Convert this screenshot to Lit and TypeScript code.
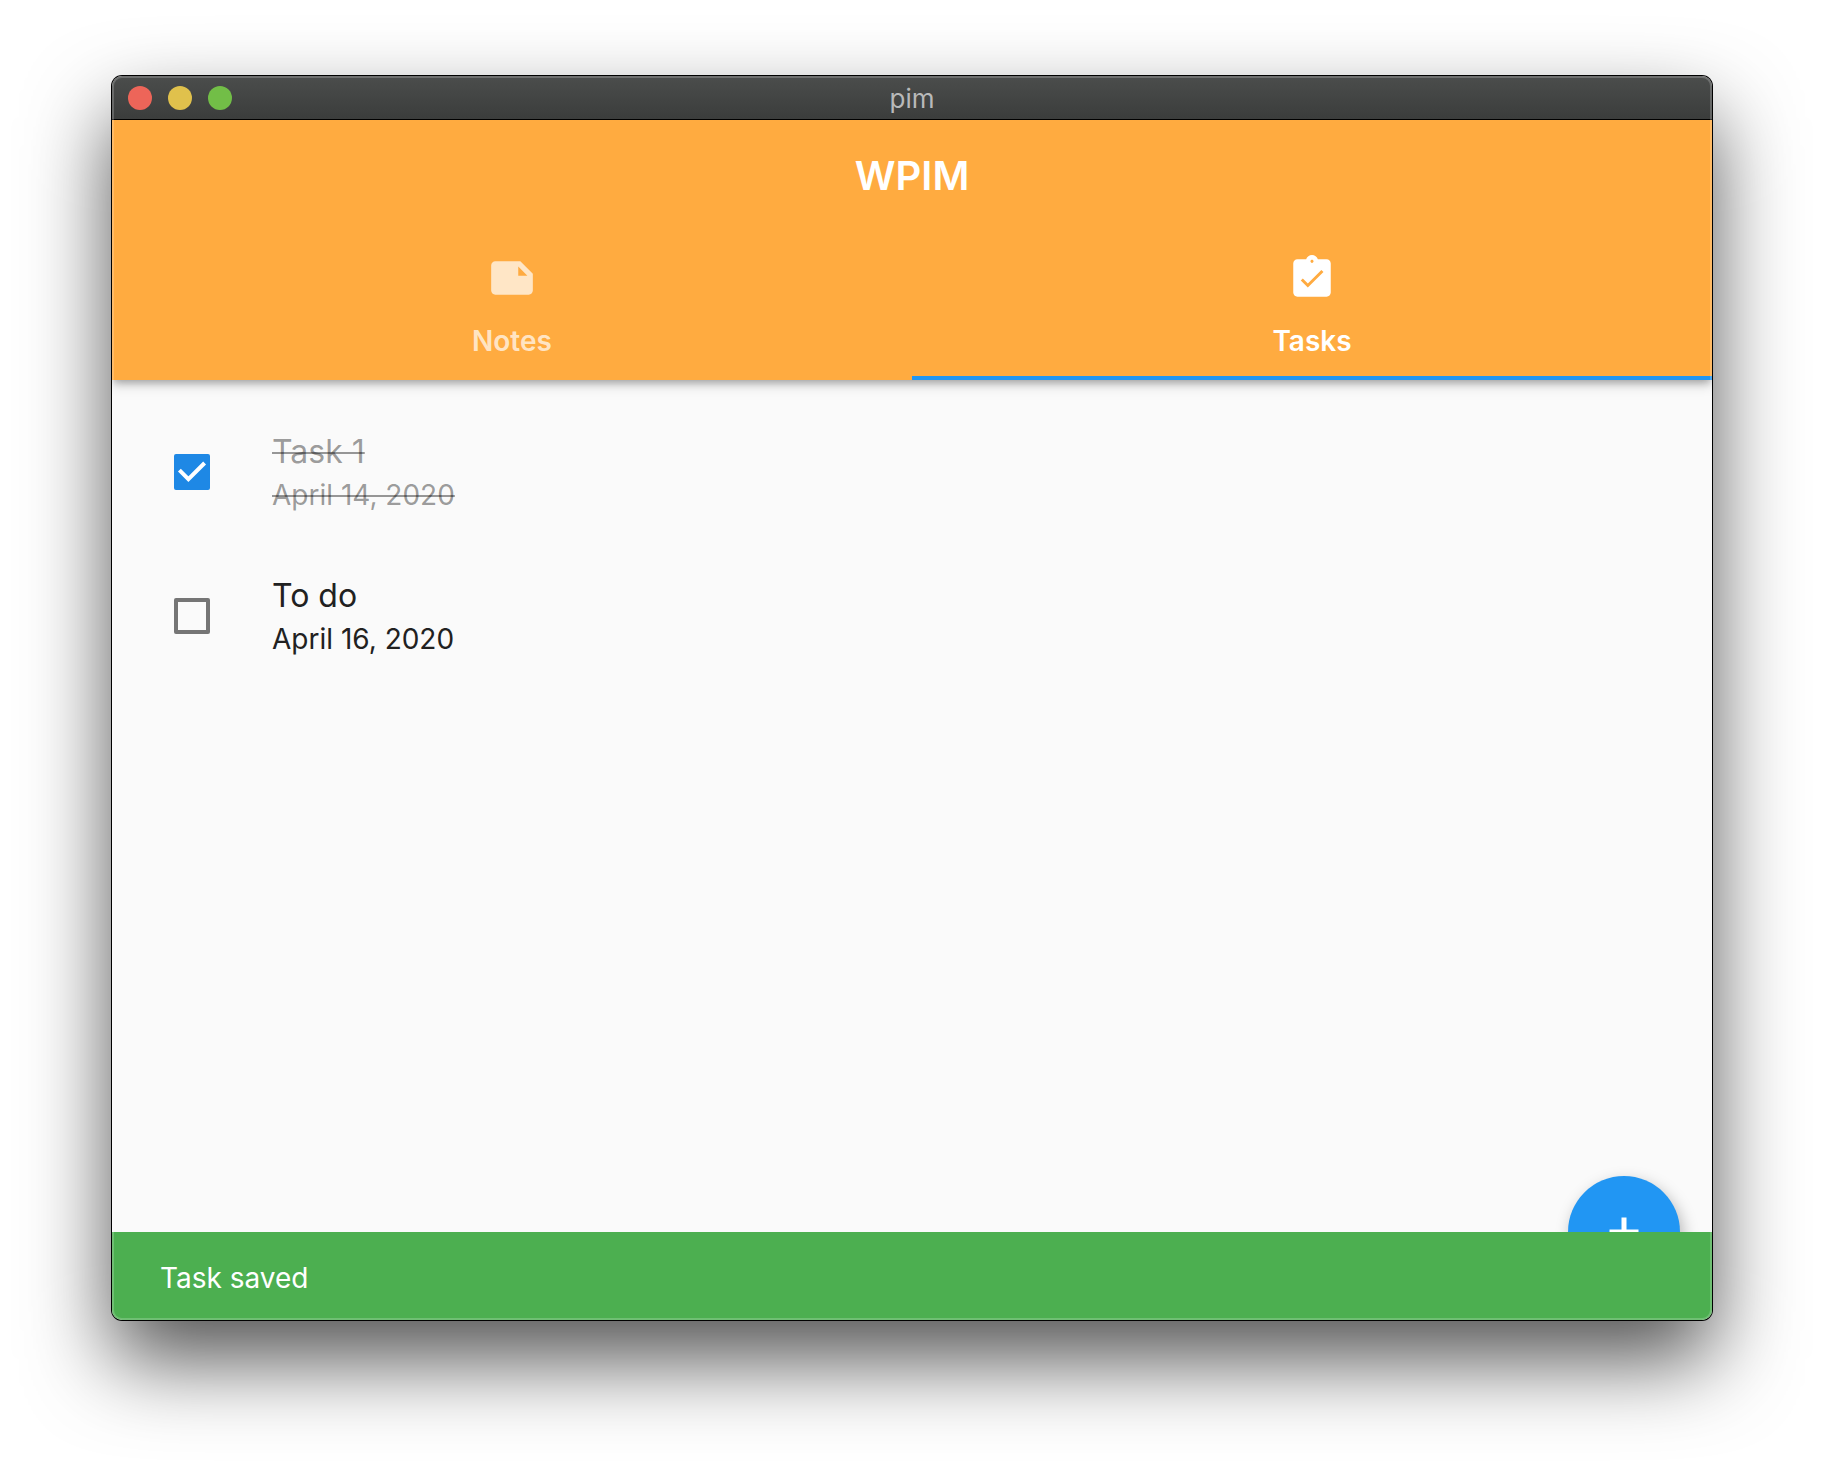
import { LitElement, html, css, svg } from "lit";
import { customElement, state } from "lit/decorators.js";
import { classMap } from "lit/directives/class-map.js";

interface Task {
  id: string;
  title: string;
  due: string;
  done: boolean;
}

const noteIcon = svg`
  <path d="M22 10l-6-6H4c-1.1 0-2 .9-2 2v12.01c0 1.1.9 1.99 2 1.99h16c1.1 0 2-.9 2-2v-8zm-7-3.5l4.4 4.4H15V6.5z" />
`;

const tasksIcon = svg`
  <path fill-rule="evenodd" d="M19 3h-4.18C14.4 1.84 13.3 1 12 1c-1.3 0-2.4.84-2.82 2H5c-1.1 0-2 .9-2 2v14c0 1.1.9 2 2 2h14c1.1 0 2-.9 2-2V5c0-1.1-.9-2-2-2zm-7 .25c.41 0 .75.34.75.75s-.34.75-.75.75-.75-.34-.75-.75.34-.75.75-.75zM10 16.6l-3.4-3.4 1-1L10 14.6l6.5-6.5 1 1z" />
`;

@customElement("app-root")
export class AppRoot extends LitElement {
  @state() private tab = "tasks";

  @state() private tasks: Task[] = [
    { id: "task-1", title: "Task 1", due: "April 14, 2020", done: true },
    { id: "task-2", title: "To do", due: "April 16, 2020", done: false },
  ];

  static styles = css`
    :host {
      display: flex;
      box-sizing: border-box;
      min-height: 100vh;
      padding: 76px 112px 148px;
      background: #fff;
      color: #212121;
      font-family: Inter, "Liberation Sans", sans-serif;
      font-size: 28px;
      line-height: 36px;
    }
    * {
      box-sizing: border-box;
    }
    button {
      border: 0;
      font: inherit;
      cursor: pointer;
    }
    .window {
      position: relative;
      flex: 1;
      min-width: 0;
      display: flex;
      flex-direction: column;
      border-radius: 10px;
      background: #fafafa;
      box-shadow: 0 0 0 1px #000, 0 40px 84px rgba(0, 0, 0, 0.68);
    }
    .window::after {
      content: "";
      position: absolute;
      inset: 0;
      z-index: 3;
      border-radius: 10px;
      box-shadow: inset 0 0 0 2px rgba(255, 255, 255, 0.2);
      pointer-events: none;
    }
    .titlebar {
      display: grid;
      grid-template-columns: 1fr auto 1fr;
      align-items: center;
      height: 44px;
      padding: 0 16px;
      border-bottom: 1px solid #000;
      border-radius: 10px 10px 0 0;
      background: linear-gradient(#4b4d4c, #3b3d3c);
      color: #b8b9b9;
      font-size: 26px;
    }
    .caption {
      padding-top: 2px;
    }
    .lights {
      display: flex;
      gap: 16px;
    }
    .light {
      width: 24px;
      height: 24px;
      padding: 0;
      border-radius: 50%;
    }
    .close { background: #ed6559; }
    .minimise { background: #e0c14c; }
    .zoom { background: #72be47; }

    .appbar {
      position: relative;
      z-index: 1;
      background: #ffab40;
      color: #fff;
      box-shadow: 0 4px 8px -2px rgba(0, 0, 0, 0.24),
        0 4px 12px rgba(0, 0, 0, 0.2);
      clip-path: inset(0 0 -32px 0);
    }
    .heading {
      display: flex;
      align-items: center;
      justify-content: center;
      height: 112px;
      margin: 0;
      font-size: 40px;
      font-weight: 600;
    }
    .tabs {
      display: flex;
    }
    .tab {
      flex: 1;
      display: flex;
      flex-direction: column;
      align-items: center;
      gap: 20px;
      height: 148px;
      padding: 21px 0 0;
      border-bottom: 4px solid transparent;
      background: none;
      color: rgba(255, 255, 255, 0.7);
      font-weight: 600;
    }
    .tab.active {
      border-color: #2196f3;
      color: #fff;
    }
    .tab svg {
      width: 50px;
      height: 50px;
      fill: currentColor;
    }
    .content {
      position: relative;
      flex: 1;
      overflow: hidden;
      padding: 20px 0;
    }
    .list {
      margin: 0;
      padding: 0;
      list-style: none;
    }
    .task {
      display: flex;
      align-items: center;
      gap: 62px;
      height: 144px;
      padding: 0 32px 0 62px;
    }
    .check {
      display: grid;
    }
    .check > * {
      grid-area: 1 / 1;
      width: 36px;
      height: 36px;
      margin: 0;
    }
    .check input {
      appearance: none;
      border: 4px solid #757575;
      border-radius: 2px;
    }
    .check input:checked {
      border-color: #1e88e5;
      background: #1e88e5;
    }
    .check svg {
      visibility: hidden;
      fill: none;
      stroke: #fff;
      stroke-width: 4;
      pointer-events: none;
    }
    .check input:checked + svg {
      visibility: visible;
    }
    .text {
      display: flex;
      flex-direction: column;
      gap: 5px;
    }
    .title {
      font-size: 32px;
      line-height: 40px;
    }
    .done .title,
    .done .due {
      color: rgba(0, 0, 0, 0.4);
      text-decoration: line-through 2px;
      text-decoration-skip-ink: none;
    }
    .fab {
      position: absolute;
      right: 32px;
      bottom: -56px;
      display: grid;
      place-items: center;
      width: 112px;
      height: 112px;
      padding: 0;
      border-radius: 50%;
      background: #2196f3;
      box-shadow: 3px 6px 16px rgba(0, 0, 0, 0.28);
    }
    .fab svg {
      width: 48px;
      height: 48px;
      fill: none;
      stroke: #fff;
      stroke-width: 5;
    }
    .snackbar {
      position: relative;
      z-index: 2;
      display: flex;
      align-items: center;
      height: 88px;
      padding: 4px 48px 0;
      border-radius: 0 0 10px 10px;
      background: #4caf50;
      color: #fff;
    }
  `;

  private toggle(id: string) {
    this.tasks = this.tasks.map((t) => (t.id === id ? { ...t, done: !t.done } : t));
  }

  private renderTab(id: string, label: string, icon: unknown) {
    const active = this.tab === id;
    return html`
      <button
        class=${classMap({ tab: true, active })}
        role="tab"
        aria-selected=${active}
        @click=${() => (this.tab = id)}
      >
        <svg viewBox="0 0 24 24" aria-hidden="true">${icon}</svg>
        <span>${label}</span>
      </button>
    `;
  }

  private renderTask(task: Task) {
    return html`
      <li class=${classMap({ task: true, done: task.done })}>
        <span class="check">
          <input
            type="checkbox"
            id=${task.id}
            .checked=${task.done}
            @change=${() => this.toggle(task.id)}
          />
          <svg viewBox="0 0 36 36" aria-hidden="true">
            <path d="M5.4 16.2L14.4 25.2L30.6 9" />
          </svg>
        </span>
        <label class="text" for=${task.id}>
          <span class="title">${task.title}</span>
          <span class="due">${task.due}</span>
        </label>
      </li>
    `;
  }

  render() {
    return html`
      <div class="window">
        <div class="titlebar">
          <div class="lights">
            <button class="light close" aria-label="Close"></button>
            <button class="light minimise" aria-label="Minimise"></button>
            <button class="light zoom" aria-label="Zoom"></button>
          </div>
          <span class="caption">pim</span>
        </div>
        <header class="appbar">
          <h1 class="heading">WPIM</h1>
          <div class="tabs" role="tablist">
            ${this.renderTab("notes", "Notes", noteIcon)}
            ${this.renderTab("tasks", "Tasks", tasksIcon)}
          </div>
        </header>
        <main class="content">
          <ul class="list">
            ${this.tasks.map((t) => this.renderTask(t))}
          </ul>
          <button class="fab" aria-label="Add task">
            <svg viewBox="0 0 48 48" aria-hidden="true">
              <path d="M24 9.5V38.5M9.5 24H38.5" />
            </svg>
          </button>
        </main>
        <div class="snackbar" role="status">Task saved</div>
      </div>
    `;
  }
}
